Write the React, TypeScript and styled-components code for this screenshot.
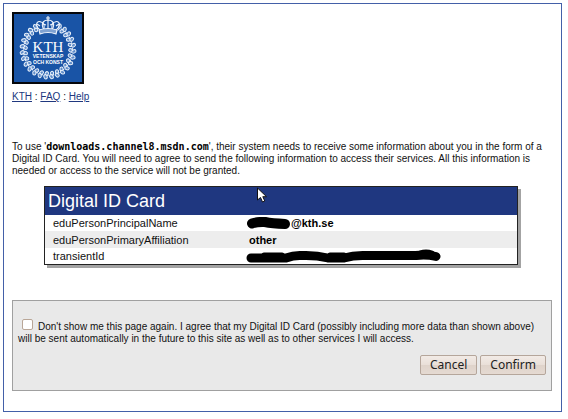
import React from "react";
import styled, { createGlobalStyle } from "styled-components";

const GlobalStyle = createGlobalStyle`
  * { box-sizing: border-box; }
  body {
    margin: 3px 6px 7px 3px;
    background: #fff;
    color: #111;
    font: 10px/12px "Liberation Sans", Arial, sans-serif;
  }
`;

const Page = styled.main`
  border: 1px solid #4360a8;
  padding: 8px 9px 20px 8px;
`;

const Logo = styled.svg`
  display: block;
  width: 72px;
  height: 72px;
`;

const Nav = styled.nav`
  margin-top: 7px;
`;

const NavLink = styled.a`
  color: #20387f;
  text-decoration: underline;
`;

const Intro = styled.p`
  margin: 38px 0 0;
`;

const Host = styled.strong`
  font: bold 10px/12px "DejaVu Sans Mono", monospace;
  color: #000;
`;

const Card = styled.section`
  position: relative;
  margin: 9px 34px 0 32px;
  border: 1px solid #222;
  box-shadow: 3px 3px 0 #a3a3a3;
  background: #fff;
`;

const CardTitle = styled.h1`
  margin: 0;
  padding: 0 3px;
  background: #1f3780;
  color: #fff;
  font-size: 18px;
  font-weight: normal;
  line-height: 28px;
`;

const Attributes = styled.table`
  width: 100%;
  border-collapse: collapse;
  font-size: 11px;
  line-height: 16px;
`;

const Row = styled.tr<{ $shaded?: boolean }>`
  height: ${(p) => (p.$shaded ? "17px" : "16px")};
  background: ${(p) => (p.$shaded ? "#ededed" : "#fff")};
`;

const Name = styled.th`
  width: 200px;
  padding: 0 0 0 8px;
  font-weight: normal;
  text-align: left;
`;

const Value = styled.td`
  padding: 0 0 0 4px;
  font-weight: bold;
  color: #000;
`;

const ValueLine = styled.div`
  display: flex;
  align-items: center;
  height: 16px;
`;

const Scribble = styled.svg`
  flex: none;
  margin-left: -3px;
`;

const Pointer = styled.svg`
  position: absolute;
  left: 211px;
  top: 0;
`;

const Consent = styled.form`
  margin-top: 35px;
  padding: 18px 5px 15px;
  border: 1px solid #a0a0a0;
  background: #e9e9e9;
`;

const Tick = styled.input`
  appearance: none;
  width: 11px;
  height: 11px;
  margin: 0 5px 0 4px;
  border: 1px solid #b9a697;
  border-radius: 2px;
  background: #fff;
  vertical-align: 0;
  &:checked { background: #8a7768; }
`;

const Actions = styled.div`
  display: flex;
  justify-content: flex-end;
  gap: 3px;
  margin-top: 10px;
`;

const Button = styled.button`
  height: 20px;
  padding: 0 9px;
  border: 1px solid #b5a69b;
  border-radius: 2px;
  background: linear-gradient(#f2ebe6, #e9dfd8 50%, #dfd3ca 50%, #e5dad2);
  color: #222;
  font: 12px/16px "Noto Sans", sans-serif;
`;

const leaves = Array.from({ length: 24 }, (_, i) => {
  const a = ((-62 + (i * 304) / 23) * Math.PI) / 180;
  return { x: 36 + 24 * Math.cos(a), y: 38 + 25 * Math.sin(a), deg: (a * 180) / Math.PI };
});

function KthLogo() {
  return (
    <Logo viewBox="0 0 72 72" role="img" aria-label="KTH Vetenskap och konst">
      <rect x="1" y="1" width="70" height="70" fill="#1954a6" stroke="#05070b" strokeWidth="2" />
      <g fill="#5f8cc8" stroke="#e8f0fa" strokeWidth="1">
        {leaves.map((l, i) => (
          <g key={i} transform={`translate(${l.x} ${l.y}) rotate(${l.deg})`}>
            <ellipse cx="-1.9" cy="-0.5" rx="2" ry="1.6" transform="rotate(30)" />
            <ellipse cx="1.9" cy="0.5" rx="2.2" ry="1.6" transform="rotate(-30)" />
            <circle cx="0.2" cy="2.9" r="0.8" fill="#e2ecf8" stroke="none" />
          </g>
        ))}
      </g>
      <path d="M25 9 H47 L45 23 H27 Z" fill="#1954a6" />
      <g fill="none" stroke="#f0f5fc" strokeWidth="1.1">
        <path d="M28 18 C22 13 25 8 29 10 C33 10 32 15 32 18" />
        <path d="M44 18 C50 13 47 8 43 10 C39 10 40 15 40 18" />
        <path d="M32 18 C28 11 32 8 36 8 C40 8 44 11 40 18 M36 8 V18" />
        <path d="M27 18 Q36 15 45 18 L44 22 Q36 19 28 22 Z" fill="#7fa2d2" />
        <path d="M36 4 V8 M34 6 H38" />
        <path d="M25 12 L28 14 M47 12 L44 14 M31 12 L34 13 M41 12 L38 13" />
      </g>
      <g fill="#fff" textAnchor="middle">
        <text x="36" y="40" fontFamily="Liberation Serif, serif" fontSize="15">KTH</text>
        <g fontFamily="Liberation Sans, sans-serif" fontSize="5" fontWeight="bold">
          <text x="36" y="46">VETENSKAP</text>
          <text x="36" y="52">OCH KONST</text>
        </g>
      </g>
    </Logo>
  );
}

export default function App() {
  return (
    <>
      <GlobalStyle />
      <Page>
        <KthLogo />
        <Nav>
          <NavLink href="#kth">KTH</NavLink> : <NavLink href="#faq">FAQ</NavLink> :{" "}
          <NavLink href="#help">Help</NavLink>
        </Nav>
        <Intro>
          To use '<Host>downloads.channel8.msdn.com</Host>', their system needs to receive some
          information about you in the form of a Digital ID Card. You will need to agree to send
          the following information to access their services. All this information is needed or
          access to the service will not be granted.
        </Intro>
        <Card>
          <CardTitle>Digital ID Card</CardTitle>
          <Attributes>
            <tbody>
              <Row>
                <Name scope="row">eduPersonPrincipalName</Name>
                <Value>
                  <ValueLine>
                    <Scribble width="45" height="12" aria-hidden="true">
                      <path d="M6 6.500 Q12 4.500 19 5 Q26 6.500 39 7" fill="none" stroke="#000" strokeWidth="10" strokeLinecap="round" />
                    </Scribble>
                    @kth.se
                  </ValueLine>
                </Value>
              </Row>
              <Row $shaded>
                <Name scope="row">eduPersonPrimaryAffiliation</Name>
                <Value>other</Value>
              </Row>
              <Row>
                <Name scope="row">transientId</Name>
                <Value>
                  <ValueLine>
                    <Scribble width="196" height="14" aria-hidden="true">
                      <path d="M5 9 H40 Q48 6 56 6.500 Q70 6 82 9 H98 Q108 6 120 6.500 H170 Q180 5 190 7.500" fill="none" stroke="#000" strokeWidth="9" strokeLinecap="round" />
                      <path d="M18 6 H36 M84 6 H98 M174 4 Q180 2 186 4" fill="none" stroke="#000" strokeWidth="5" strokeLinecap="round" />
                    </Scribble>
                  </ValueLine>
                </Value>
              </Row>
            </tbody>
          </Attributes>
          <Pointer width="12" height="18" viewBox="0 0 12 18" aria-hidden="true">
            <path d="M1.500 1 V13 L4.500 10.500 L6.500 15 L8.800 14 L6.800 9.700 H10.500 Z" fill="#fff" stroke="#111" />
          </Pointer>
        </Card>
        <Consent onSubmit={(e) => e.preventDefault()}>
          <Tick type="checkbox" id="remember" />
          <label htmlFor="remember">
            Don't show me this page again. I agree that my Digital ID Card (possibly including more
            data than shown above) will be sent automatically in the future to this site as well as
            to other services I will access.
          </label>
          <Actions>
            <Button type="button">Cancel</Button>
            <Button type="submit">Confirm</Button>
          </Actions>
        </Consent>
      </Page>
    </>
  );
}
